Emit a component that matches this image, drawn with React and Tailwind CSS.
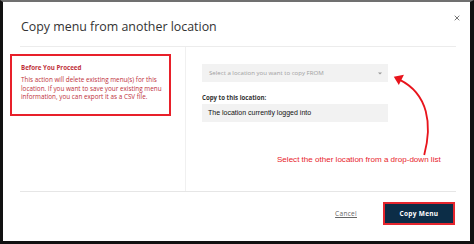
import React from "react";

const sans = { fontFamily: '"Open Sans", "Noto Sans", sans-serif' };
const arial = { fontFamily: '"Liberation Sans", Arial, sans-serif' };

const CopyMenuDialog = () => {
  return (
    <div className="relative w-[474px] h-[244px] bg-white border-t-2 border-t-[#707070] border-l-[3px] border-l-[#111] border-r-4 border-r-[#111] border-b-[3px] border-b-[#111]" style={sans}>
      {/* Header */}
      <div className="ml-[17px] mr-[14px] pt-[15px] pb-[9px] pl-[1px] border-b border-[#ececec]">
        <h2 className="text-[12.4px] leading-[20px] text-[#333]">Copy menu from another location</h2>
      </div>
      <button className="absolute top-[11px] right-[9px] w-[9px] h-[9px] flex items-center justify-center text-[#777]">
        <svg width="6" height="6" viewBox="0 0 6 6">
          <path d="M0.7 0.7 L5.3 5.3 M5.3 0.7 L0.7 5.3" stroke="currentColor" strokeWidth="1" />
        </svg>
      </button>

      {/* Body */}
      <div className="flex h-[144px]">
        <div className="w-[183px] border-r border-[#f0f0f0] pt-[7px] pl-[7px]">
          <div className="w-[161px] h-[62px] border-2 border-[#e8202a] pl-[9px] pr-[4px] pt-[8px]">
            <p className="text-[6.2px] leading-[7px] font-bold text-[#c0303a]">Before You Proceed</p>
            <p className="mt-[5px] text-[6.35px] leading-[8.5px] text-[#c0303a]">
              This action will delete existing menu(s) for this location. If you want to save your existing menu information, you can export it as a CSV file.
            </p>
          </div>
        </div>
        <div className="pl-[16px] pt-[17px]">
          <div className="w-[186px] h-[18px] bg-[#f2f2f2] flex items-center justify-between pl-[7px] pr-[6px]">
            <span className="text-[6.1px] text-[#a0a0a0]">Select a location you want to copy FROM</span>
            <svg width="4" height="3" viewBox="0 0 4 3">
              <path d="M0 0.5 L2 2.5 L4 0.5 Z" fill="#999" />
            </svg>
          </div>
          <p className="mt-[12px] text-[6.1px] leading-[8px] font-bold text-[#333]">Copy to this location:</p>
          <div className="mt-[2px] w-[186px] h-[18px] bg-[#f2f2f2] flex items-center pl-[6px]">
            <span className="text-[7px] text-[#111]" style={arial}>The location currently logged into</span>
          </div>
        </div>
      </div>

      {/* Footer */}
      <div className="ml-[17px] mr-[14px] border-t border-[#e6e6e6] flex justify-end items-center pt-[10px] pr-[1px]">
        <a className="text-[6.5px] text-[#666] underline tracking-[0.3px] mr-[26px]" href="#">Cancel</a>
        <div className="w-[72px] h-[23px] border-2 border-[#e5262e] bg-[#0c2d47] flex items-center justify-center">
          <span className="text-[6.5px] font-bold text-white tracking-[0.3px]">Copy Menu</span>
        </div>
      </div>

      {/* Annotation */}
      <svg className="absolute left-0 top-0" width="474" height="244" viewBox="3 2 467 239" style={{ pointerEvents: "none" }}>
        <path d="M418 152 C 426 122, 422 92, 394 78" fill="none" stroke="#e8141c" strokeWidth="1.8" />
        <path d="M388 75 L 398 73 L 393 83 Z" fill="#e8141c" />
      </svg>
      <span className="absolute left-[274px] top-[153px] text-[8.05px] leading-[10px] text-[#e8232a] whitespace-nowrap" style={arial}>
        Select the other location from a drop-down list
      </span>
    </div>
  );
};

export default function App() {
  return <CopyMenuDialog />;
}
